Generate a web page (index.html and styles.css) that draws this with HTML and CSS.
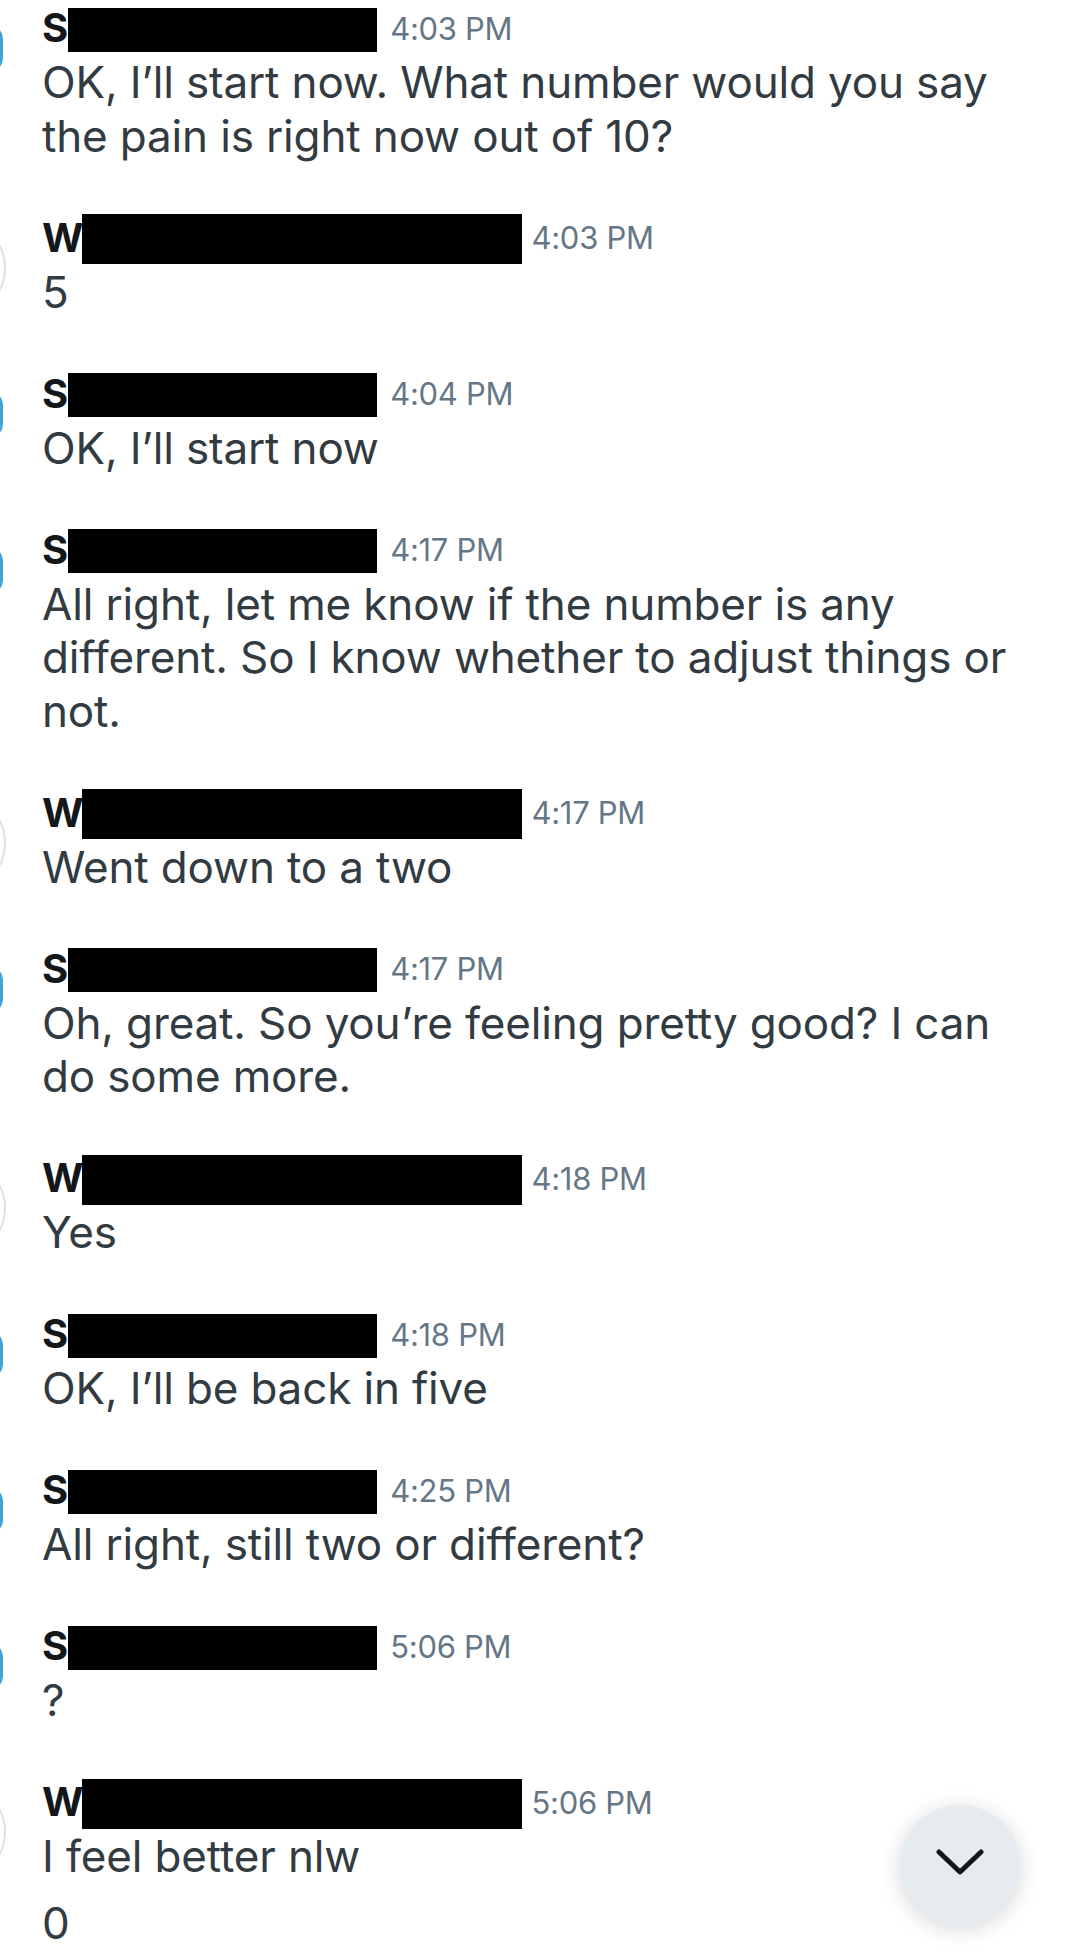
FILE: index.html
```html
<!DOCTYPE html>
<html lang="en">
<head>
<meta charset="utf-8">
<title>Messages</title>
<link rel="stylesheet" href="styles.css">
</head>
<body>
<main class="thread">
  <section class="msg msg-s">
    <div class="avatar avatar-s"></div>
    <div class="head"><span class="name">S</span><span class="redact redact-s"></span><span class="time">4:03 PM</span></div>
    <p class="text">OK, I’ll start now. What number would you say the pain is right now out of 10?</p>
  </section>
  <section class="msg msg-w">
    <div class="avatar avatar-w"></div>
    <div class="head"><span class="name">W</span><span class="redact redact-w"></span><span class="time">4:03 PM</span></div>
    <p class="text">5</p>
  </section>
  <section class="msg msg-s">
    <div class="avatar avatar-s"></div>
    <div class="head"><span class="name">S</span><span class="redact redact-s"></span><span class="time">4:04 PM</span></div>
    <p class="text">OK, I’ll start now</p>
  </section>
  <section class="msg msg-s">
    <div class="avatar avatar-s"></div>
    <div class="head"><span class="name">S</span><span class="redact redact-s"></span><span class="time">4:17 PM</span></div>
    <p class="text">All right, let me know if the number is any different. So I know whether to adjust things or not.</p>
  </section>
  <section class="msg msg-w">
    <div class="avatar avatar-w"></div>
    <div class="head"><span class="name">W</span><span class="redact redact-w"></span><span class="time">4:17 PM</span></div>
    <p class="text">Went down to a two</p>
  </section>
  <section class="msg msg-s">
    <div class="avatar avatar-s"></div>
    <div class="head"><span class="name">S</span><span class="redact redact-s"></span><span class="time">4:17 PM</span></div>
    <p class="text">Oh, great. So you’re feeling pretty good? I can do some more.</p>
  </section>
  <section class="msg msg-w">
    <div class="avatar avatar-w"></div>
    <div class="head"><span class="name">W</span><span class="redact redact-w"></span><span class="time">4:18 PM</span></div>
    <p class="text">Yes</p>
  </section>
  <section class="msg msg-s">
    <div class="avatar avatar-s"></div>
    <div class="head"><span class="name">S</span><span class="redact redact-s"></span><span class="time">4:18 PM</span></div>
    <p class="text">OK, I’ll be back in five</p>
  </section>
  <section class="msg msg-s">
    <div class="avatar avatar-s"></div>
    <div class="head"><span class="name">S</span><span class="redact redact-s"></span><span class="time">4:25 PM</span></div>
    <p class="text">All right, still two or different?</p>
  </section>
  <section class="msg msg-s">
    <div class="avatar avatar-s"></div>
    <div class="head"><span class="name">S</span><span class="redact redact-s"></span><span class="time">5:06 PM</span></div>
    <p class="text">?</p>
  </section>
  <section class="msg msg-w">
    <div class="avatar avatar-w"></div>
    <div class="head"><span class="name">W</span><span class="redact redact-w"></span><span class="time">5:06 PM</span></div>
    <p class="text">I feel better nlw</p>
    <p class="text text-next">0</p>
  </section>
</main>
<button class="scroll-down" type="button" aria-label="Scroll to bottom">
  <svg viewBox="0 0 48 26" width="48" height="26" aria-hidden="true"><path d="M3 3 L24 23 L45 3" fill="none" stroke="#14171a" stroke-width="5" stroke-linecap="round" stroke-linejoin="round"/></svg>
</button>
</body>
</html>
```
FILE: styles.css
```css
html, body {
  margin: 0;
  padding: 0;
  background: #ffffff;
}
body {
  width: 1067px;
  height: 1960px;
  overflow: hidden;
  font-family: "Inter", "Liberation Sans", sans-serif;
}
.thread {
  padding: 0 44px 0 42px;
}
.msg {
  position: relative;
  margin-bottom: 46.5px;
}
.head {
  display: flex;
  align-items: center;
  height: 56px;
}
.name {
  font-weight: 700;
  font-size: 40px;
  color: #14171a;
  line-height: 1;
}
.redact {
  display: block;
  background: #000;
  margin-top: 3px;
}
.redact-s {
  width: 309px;
  height: 44px;
}
.redact-w {
  width: 440px;
  height: 50px;
  margin-left: -2px;
}
.time {
  font-size: 31px;
  color: #657786;
  margin-left: 13px;
  letter-spacing: -0.3px;
}
.msg-w .time {
  margin-left: 10px;
}
.text {
  margin: 0;
  font-size: 44px;
  line-height: 53.5px;
  letter-spacing: -0.15px;
  color: #323b42;
}
.text-next {
  margin-top: 13px;
}
.avatar {
  position: absolute;
  box-sizing: border-box;
}
.avatar-s {
  left: -86px;
  top: 25px;
  width: 47px;
  height: 47px;
  border-radius: 14px;
  background: #3ca5dc;
}
.avatar-w {
  left: -136px;
  top: 8px;
  width: 100px;
  height: 100px;
  border-radius: 50%;
  border: 2px solid #dfe2e5;
}
.scroll-down {
  position: fixed;
  right: 47px;
  bottom: 35px;
  width: 120px;
  height: 120px;
  border: none;
  border-radius: 50%;
  background: #e6ebef;
  box-shadow: 0 4px 22px rgba(0, 0, 0, 0.16);
  display: flex;
  align-items: center;
  justify-content: center;
  padding: 0;
}
.scroll-down svg {
  display: block;
  margin-top: -6px;
}
```
